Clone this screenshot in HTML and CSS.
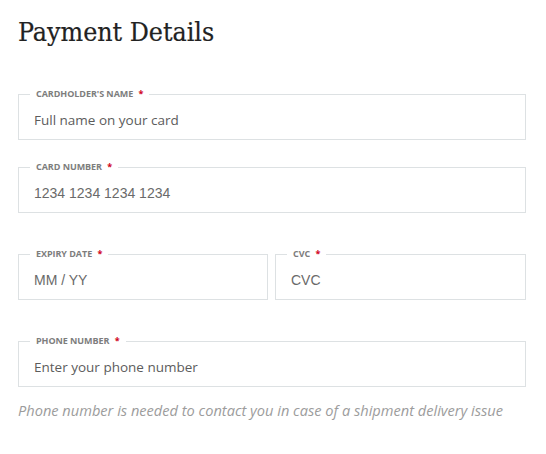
FILE: index.html
```html
<!DOCTYPE html>
<html>
<head>
<meta charset="utf-8">
<link rel="stylesheet" href="styles.css">
</head>
<body>
<div class="page">
  <h1 class="title">Payment Details</h1>
  <form class="form">
    <fieldset class="field row-first">
      <legend class="label">CARDHOLDER'S NAME <span class="req">*</span></legend>
      <input class="input sans" type="text" placeholder="Full name on your card">
    </fieldset>
    <fieldset class="field row-second">
      <legend class="label">CARD NUMBER <span class="req">*</span></legend>
      <input class="input arial" type="text" placeholder="1234 1234 1234 1234">
    </fieldset>
    <div class="split">
      <fieldset class="field">
        <legend class="label">EXPIRY DATE <span class="req">*</span></legend>
        <input class="input arial" type="text" placeholder="MM / YY">
      </fieldset>
      <fieldset class="field">
        <legend class="label">CVC <span class="req">*</span></legend>
        <input class="input arial" type="text" placeholder="CVC">
      </fieldset>
    </div>
    <fieldset class="field row-phone">
      <legend class="label">PHONE NUMBER <span class="req">*</span></legend>
      <input class="input sans" type="text" placeholder="Enter your phone number">
    </fieldset>
    <p class="help">Phone number is needed to contact you in case of a shipment delivery issue</p>
  </form>
</div>
</body>
</html>
```
FILE: styles.css
```css
html, body {
  margin: 0;
  padding: 0;
  background: #ffffff;
}
.page {
  padding: 15px 20px 0 18px;
}
.title {
  margin: 0;
  font-family: "DejaVu Serif Condensed", "DejaVu Serif", serif;
  font-weight: normal;
  font-size: 26.5px;
  line-height: 34px;
  color: #222222;
  -webkit-text-stroke: 0.2px #222222;
}
.form {
  margin-top: 39px;
  display: flex;
  flex-direction: column;
}
.field {
  margin: 0;
  padding: 0;
  border: 1px solid #dde1e3;
  min-width: 0;
}
.label {
  margin-left: 11px;
  padding: 0 6px;
  font-family: "Open Sans", sans-serif;
  font-weight: bold;
  font-size: 9px;
  line-height: 12px;
  color: #7d7d7d;
  letter-spacing: -0.05px;
}
.req {
  color: #d0021b;
  margin-left: 3px;
}
.input {
  display: block;
  width: 100%;
  box-sizing: border-box;
  height: 39px;
  padding: 0 15px 0;
  border: none;
  outline: none;
  background: transparent;
  font-size: 14px;
  color: #555555;
}
.input::placeholder {
  color: #5c5c5c;
  opacity: 1;
}
.sans {
  font-family: "Open Sans", sans-serif;
  font-size: 13.5px;
}
.arial {
  font-family: "Liberation Sans", Arial, sans-serif;
}
.arial::placeholder {
  color: #6a6a6a;
}
.row-second {
  margin-top: 21px;
}
.split {
  margin-top: 35px;
  display: grid;
  grid-template-columns: 250px 1fr;
  gap: 7px;
}
.row-phone {
  margin-top: 35px;
}
.help {
  margin: 13px 0 0;
  font-family: "Open Sans", sans-serif;
  font-style: italic;
  font-size: 14.6px;
  color: #9c9c9c;
}
```
